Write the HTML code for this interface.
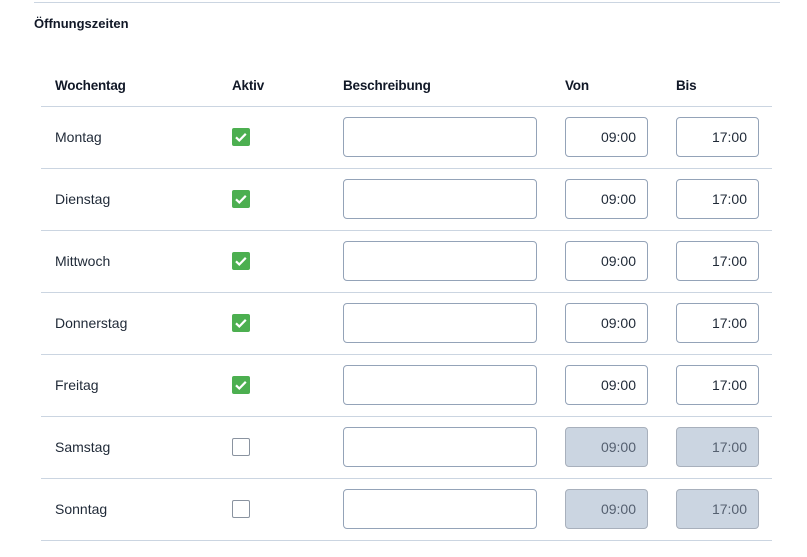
<!DOCTYPE html>
<html><head><meta charset="utf-8"><style>
body{margin:0;width:807px;height:557px;background:#fff;font-family:"Liberation Sans",sans-serif;color:#1f2330;position:relative;overflow:hidden}
.top{position:absolute;left:34px;top:2px;width:746px;height:1px;background:#cbd5e1}
.title{position:absolute;left:34px;top:16px;font-size:13px;font-weight:bold;color:#111827}
.h{position:absolute;top:78px;font-size:13.5px;font-weight:bold;color:#111827;letter-spacing:-0.2px}
.line{position:absolute;left:41px;width:731px;height:1px;background:#cbd5e1}
.day{position:absolute;left:55px;font-size:14px;color:#1f2937}
.cb{position:absolute;left:232px;width:18px;height:18px;border-radius:2px;box-sizing:border-box}
.on{background:#4caf50}
.off{border:1.5px solid #8a93a0;background:#fff}
.inp{position:absolute;height:40px;box-sizing:border-box;border:1px solid #94a3b8;border-radius:4px;background:#fff;font-size:14px;color:#1f2937;text-align:right;padding-right:11px;line-height:38px}
.dis{background:#cbd5e1;border-color:#a8b0bc;color:#556070}
</style></head><body>
<div class="top"></div>
<div class="title">Öffnungszeiten</div>
<div class="h" style="left:55px">Wochentag</div>
<div class="h" style="left:232px">Aktiv</div>
<div class="h" style="left:343px">Beschreibung</div>
<div class="h" style="left:565px">Von</div>
<div class="h" style="left:676px">Bis</div>
<div class="line" style="top:106px"></div>
<div id="rows"></div>
<script>
var d=["Montag","Dienstag","Mittwoch","Donnerstag","Freitag","Samstag","Sonntag"],h="";
d.forEach(function(n,i){var y=106+62*i,on=i<5;
h+='<div class="day" style="top:'+(y+23)+'px">'+n+'</div>';
h+=on?'<div class="cb on" style="top:'+(y+22)+'px"><svg width="18" height="18"><path d="M4 9.3l3.3 3.2 6.5-6.7" fill="none" stroke="#fff" stroke-width="2.2"/></svg></div>':'<div class="cb off" style="top:'+(y+22)+'px"></div>';
h+='<div class="inp" style="left:343px;width:194px;top:'+(y+11)+'px"></div>';
h+='<div class="inp'+(on?'':' dis')+'" style="left:565px;width:83px;top:'+(y+11)+'px">09:00</div>';
h+='<div class="inp'+(on?'':' dis')+'" style="left:676px;width:83px;top:'+(y+11)+'px">17:00</div>';
h+='<div class="line" style="top:'+(y+62)+'px"></div>';});
document.getElementById("rows").innerHTML=h;
</script>
</body></html>
